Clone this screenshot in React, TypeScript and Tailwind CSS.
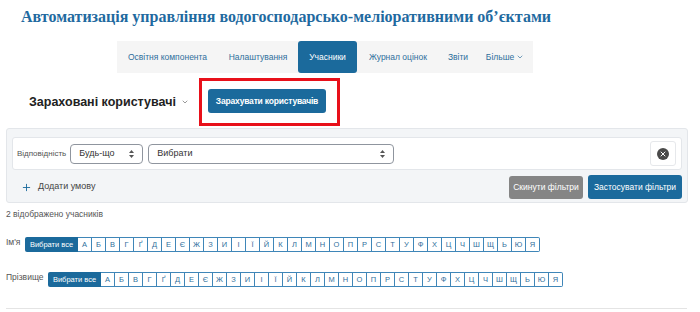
import { ChevronDown, Plus, X } from "lucide-react";

const letters = ["А","Б","В","Г","Ґ","Д","Е","Є","Ж","З","И","І","Ї","Й","К","Л","М","Н","О","П","Р","С","Т","У","Ф","Х","Ц","Ч","Ш","Щ","Ь","Ю","Я"];

const tabs = [
  { t: "Освітня компонента", w: "w-[101px]" },
  { t: "Налаштування", w: "w-[80px]" },
  { t: "Учасники", w: "w-[59px]" },
  { t: "Журнал оцінок", w: "w-[82px]" },
  { t: "Звіти", w: "w-[38px]" },
];

const LetterBar = () => (
  <div className="flex h-[15px]">
    <span className="flex w-[53px] items-center justify-center rounded-l-[2px] bg-[#1b6a9c] text-[7.5px] text-white">Вибрати все</span>
    {letters.map((l, i) => (
      <span
        key={l}
        className={`flex w-[14px] items-center justify-center border border-l-0 border-[#3f86b8] text-[7.5px] text-[#2f6f9c] ${i === letters.length - 1 ? "rounded-r-[2px]" : ""}`}
      >
        {l}
      </span>
    ))}
  </div>
);

const Select = ({ label, w }: { label: string; w: string }) => (
  <div className={`flex h-[20px] ${w} items-center justify-between rounded-[4px] border border-[#8f959e] bg-white px-[8px] text-[9px] text-[#333]`}>
    <span>{label}</span>
    <svg width="5" height="8" viewBox="0 0 5 8" className="fill-[#555]">
      <path d="M2.5 0 5 3H0z" />
      <path d="M2.5 8 5 5H0z" />
    </svg>
  </div>
);

export default function App() {
  return (
    <div className="h-[312px] w-[700px] overflow-hidden bg-white font-['Liberation_Sans',sans-serif] text-[#444]">
      <h1 className="whitespace-nowrap pl-[21px] pt-[6px] font-['Liberation_Serif',serif] text-[16px] font-bold leading-[22px] text-[#1f6aa0]">
        Автоматизація управління водогосподарсько-меліоративними об’єктами
      </h1>

      <nav className="ml-[117px] mt-[13px] flex h-[32px] w-[416px] items-center whitespace-nowrap bg-[#f5f5f5] text-[8.5px] text-[#2f6f9c]">
        {tabs.map(({ t, w }) => (
          <span
            key={t}
            className={`${w} flex h-[32px] items-center justify-center ${t === "Учасники" ? "rounded-[3px] bg-[#1b6a9c] text-white" : ""}`}
          >
            {t}
          </span>
        ))}
        <span className="flex w-[56px] items-center justify-center gap-[2px]">
          Більше <ChevronDown size={8} strokeWidth={2} />
        </span>
      </nav>

      <div className="mt-[5px] flex items-center">
        <div className="flex w-[199px] items-center gap-[5px] whitespace-nowrap pl-[29px] text-[12.5px] font-bold text-[#222]">
          Зараховані користувачі <ChevronDown size={8} strokeWidth={2} className="text-[#666]" />
        </div>
        <div className="h-[48px] w-[141px] border-[3px] border-[#e8101a] pl-[6px] pt-[6px]">
          <button className="h-[24px] w-[118px] whitespace-nowrap rounded-[3px] bg-[#1b6a9c] text-[8.5px] font-bold tracking-[-0.2px] text-white">
            Зарахувати користувачів
          </button>
        </div>
      </div>

      <div className="ml-[6px] mt-[2px] h-[75px] w-[682px] rounded-[3px] border border-[#e3e6ea] bg-[#f3f5f7] px-[5px] pt-[8px]">
        <div className="flex h-[33px] items-center rounded-[3px] border border-[#e3e6ea] bg-white pl-[4px] pr-[5px]">
          <span className="mr-[4px] whitespace-nowrap text-[8px] text-[#555]">Відповідність</span>
          <Select label="Будь-що" w="w-[73px]" />
          <div className="w-[5px]" />
          <Select label="Вибрати" w="w-[246px]" />
          <div className="ml-auto flex h-[25px] w-[26px] items-center justify-center rounded-[3px] border border-[#e6e8eb] bg-white">
            <span className="flex h-[12px] w-[12px] items-center justify-center rounded-full bg-[#4a4a4a]">
              <X size={8} strokeWidth={3} className="text-white" />
            </span>
          </div>
        </div>
        <div className="mt-[5px] flex items-center">
          <span className="flex items-center gap-[6px] pl-[9px] text-[9px] text-[#444]">
            <Plus size={11} strokeWidth={2} className="text-[#1b6a9c]" /> Додати умову
          </span>
          <button className="ml-auto h-[23px] w-[74px] whitespace-nowrap rounded-[3px] bg-[#858585] text-[8.5px] text-white">Скинути фільтри</button>
          <button className="ml-[5px] h-[24px] w-[94px] whitespace-nowrap rounded-[3px] bg-[#1b6a9c] text-[8.5px] text-white">Застосувати фільтри</button>
        </div>
      </div>

      <div className="pl-[6px] pt-[5px] text-[8.5px] text-[#555]">2 відображено учасників</div>

      <div className="mt-[16px] flex items-start pl-[6px]">
        <span className="w-[19px] text-[8.5px] leading-[11px] text-[#555]">Ім'я</span>
        <LetterBar />
      </div>
      <div className="mt-[20px] flex items-start pl-[6px]">
        <span className="w-[42px] text-[8.5px] leading-[11px] text-[#555]">Прізвище</span>
        <LetterBar />
      </div>

      <div className="ml-[6px] mt-[21px] h-[1px] w-[681px] bg-[#e4e4e4]" />
    </div>
  );
}
